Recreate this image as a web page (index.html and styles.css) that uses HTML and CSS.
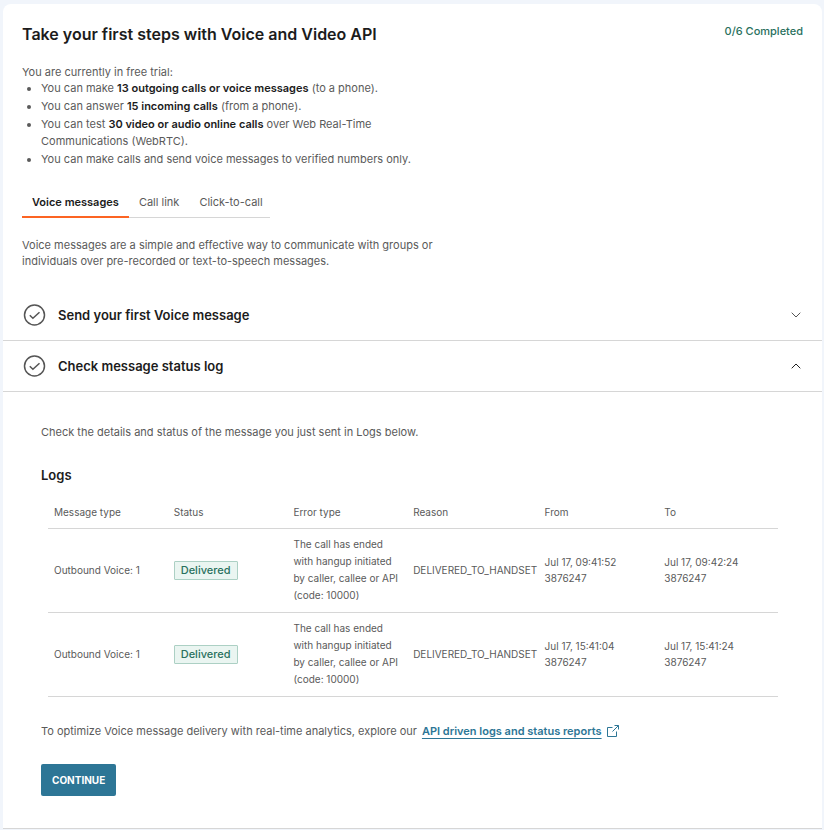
FILE: index.html
```html
<!DOCTYPE html>
<html lang="en">
<head>
<meta charset="utf-8">
<meta name="viewport" content="width=device-width, initial-scale=1">
<title>Voice and Video API</title>
<link rel="stylesheet" href="styles.css">
</head>
<body>
<main class="card">
  <header class="intro">
    <div class="title-row">
      <h1>Take your first steps with Voice and Video API</h1>
      <span class="progress">0/6 Completed</span>
    </div>
    <p class="trial">You are currently in free trial:</p>
    <ul class="limits">
      <li>You can make <strong>13 outgoing calls or voice messages</strong> (to a phone).</li>
      <li>You can answer <strong>15 incoming calls</strong> (from a phone).</li>
      <li>You can test <strong>30 video or audio online calls</strong> over Web Real-Time Communications (WebRTC).</li>
      <li>You can make calls and send voice messages to verified numbers only.</li>
    </ul>
    <div class="tabs" role="tablist">
      <button class="tab active" role="tab" aria-selected="true">Voice messages</button>
      <button class="tab" role="tab" aria-selected="false">Call link</button>
      <button class="tab" role="tab" aria-selected="false">Click-to-call</button>
    </div>
    <p class="description">Voice messages are a simple and effective way to communicate with groups or individuals over pre-recorded or text-to-speech messages.</p>
  </header>

  <button class="step" aria-expanded="false">
    <svg class="check" viewBox="0 0 22 22"><circle cx="11" cy="11" r="10"/><path d="M6.300 11.200l3.100 3.100 6.600-6.100"/></svg>
    <span class="step-title">Send your first Voice message</span>
    <svg class="chevron" viewBox="0 0 10 6"><path d="M.7 .7L5 5l4.300-4.300"/></svg>
  </button>
  <button class="step open" aria-expanded="true">
    <svg class="check" viewBox="0 0 22 22"><circle cx="11" cy="11" r="10"/><path d="M6.300 11.200l3.100 3.100 6.600-6.100"/></svg>
    <span class="step-title">Check message status log</span>
    <svg class="chevron" viewBox="0 0 10 6"><path d="M.7 5.300L5 1l4.300 4.300"/></svg>
  </button>

  <section class="panel">
    <p>Check the details and status of the message you just sent in Logs below.</p>
    <h2>Logs</h2>
    <div class="table-wrap">
      <table>
        <colgroup><col class="c"><col class="c"><col class="c"><col class="reason"><col class="c"><col class="c"></colgroup>
        <thead>
          <tr><th>Message type</th><th>Status</th><th>Error type</th><th>Reason</th><th>From</th><th>To</th></tr>
        </thead>
        <tbody>
          <tr>
            <td>Outbound Voice: 1</td>
            <td><span class="badge">Delivered</span></td>
            <td class="error">The call has ended with hangup initiated by caller, callee or API (code: 10000)</td>
            <td>DELIVERED_TO_HANDSET</td>
            <td>Jul 17, 09:41:52<br>3876247</td>
            <td>Jul 17, 09:42:24<br>3876247</td>
          </tr>
          <tr>
            <td>Outbound Voice: 1</td>
            <td><span class="badge">Delivered</span></td>
            <td class="error">The call has ended with hangup initiated by caller, callee or API (code: 10000)</td>
            <td>DELIVERED_TO_HANDSET</td>
            <td>Jul 17, 15:41:04<br>3876247</td>
            <td>Jul 17, 15:41:24<br>3876247</td>
          </tr>
        </tbody>
      </table>
    </div>
    <p class="more">To optimize Voice message delivery with real-time analytics, explore our <a href="#reports">API driven logs and status reports</a><svg class="external" viewBox="0 0 12 12"><path d="M5.500 2.500h-5v9h9v-5M5.500 6.500l6-6M7.500 .5h4v4"/></svg></p>
    <button class="continue">CONTINUE</button>
  </section>
</main>
</body>
</html>
```
FILE: styles.css
```css
* {
  box-sizing: border-box;
}

body {
  margin: 0;
  padding: 4px 2px 1px 3px;
  background: #f1f5fb;
  color: #5a5a5a;
  font: 11px/16px Inter, "Liberation Sans", sans-serif;
}

h1, h2, p, ul {
  margin: 0;
}

button {
  font: inherit;
  color: inherit;
  border: 0;
  background: none;
  cursor: pointer;
}

.card {
  background: #fff;
  border-radius: 8px 8px 0 0;
  border-bottom: 1px solid #d6d6d6;
}

.intro {
  padding: 20px 19px 21px;
}

.title-row {
  display: flex;
  justify-content: space-between;
}

h1 {
  font-size: 16px;
  line-height: 20px;
  font-weight: 600;
  color: #1c1c1c;
}

.progress {
  line-height: 14px;
  color: #29705d;
  font-weight: 500;
}

.trial {
  margin-top: 20px;
}

.limits {
  display: grid;
  gap: 1px;
  max-width: 400px;
  padding-left: 19px;
  line-height: 17px;
}

strong {
  font-weight: 600;
  color: #1c1c1c;
}

.tabs {
  display: inline-flex;
  margin-top: 20px;
  border-bottom: 1px solid #d6d6d6;
}

.tab {
  height: 30px;
  margin-bottom: -1px;
  padding: 0 10px;
  border-bottom: 2px solid transparent;
}

.tab:last-child {
  padding-right: 7px;
}

.tab.active {
  border-color: #fc6423;
  color: #1c1c1c;
  font-weight: 600;
}

.description {
  max-width: 430px;
  margin-top: 19px;
}

.step {
  display: flex;
  align-items: center;
  gap: 12px;
  width: 100%;
  height: 51px;
  padding: 0 21px 0 20px;
  border-bottom: 1px solid #d6d6d6;
  text-align: left;
}

.step-title {
  flex: 1;
}

.step-title, h2 {
  font-size: 13px;
  font-weight: 600;
  color: #1c1c1c;
}

svg {
  fill: none;
  stroke: #555;
}

.check {
  width: 23px;
  height: 22px;
  stroke-width: 1.5;
}

.chevron {
  width: 10px;
  height: 6px;
}

.open .chevron {
  stroke: #222;
}

.panel {
  padding: 32px 38px;
}

h2 {
  margin-top: 27px;
}

.table-wrap {
  padding: 13px 6px 0 7px;
}

table {
  width: 100%;
  border-collapse: collapse;
  table-layout: fixed;
  font-size: 10px;
}

.c {
  width: 16.4%;
}

.reason {
  width: 18%;
}

th, td {
  padding: 7px 6px;
  border-bottom: 1px solid #d6d6d6;
  font-weight: 400;
  text-align: left;
}

th {
  height: 32px;
}

td {
  height: 84px;
}

.error {
  line-height: 17px;
}

.badge {
  display: inline-block;
  padding: 0 6px;
  border: 1px solid #acd0c4;
  border-radius: 1px;
  background: #eaf5f1;
  color: #29705d;
  font-size: 11px;
  line-height: 17px;
  font-weight: 500;
}

.more {
  display: flex;
  align-items: center;
  gap: 5px;
  margin-top: 26px;
}

.more a {
  color: #2d7696;
  font-weight: 600;
  text-underline-offset: 3px;
}

.external {
  width: 12px;
  height: 12px;
  stroke: #2d7696;
}

.continue {
  height: 32px;
  margin-top: 25px;
  padding: 0 11px;
  border-radius: 2px;
  background: #2d7696;
  color: #fff;
  font-size: 10px;
  font-weight: 700;
}
```
